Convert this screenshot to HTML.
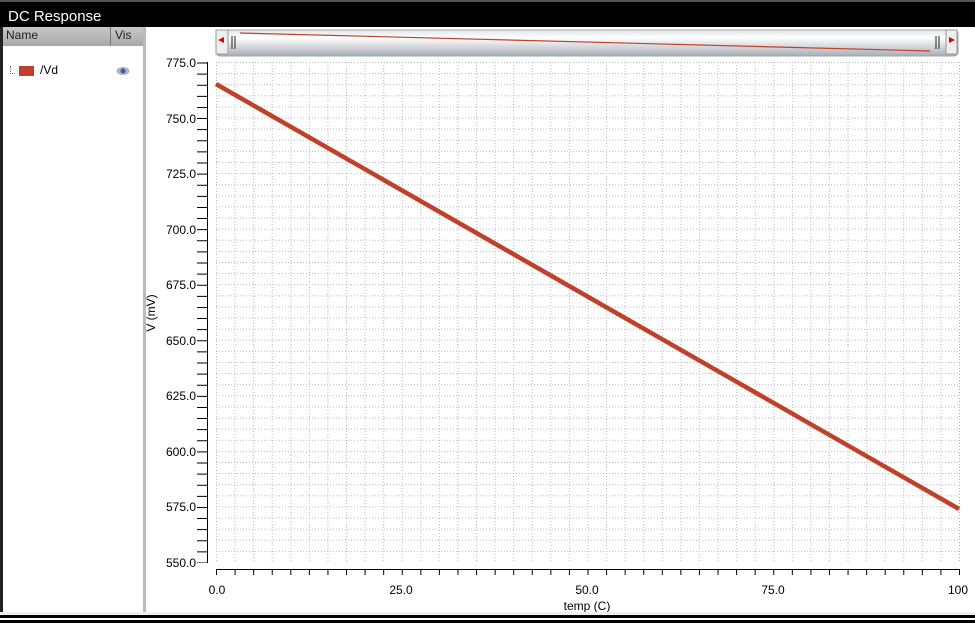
<!DOCTYPE html>
<html><head><style>
body{margin:0;width:975px;height:625px;overflow:hidden;background:#fff;font-family:"Liberation Sans",sans-serif;position:relative}
.t{position:absolute;left:0;top:0;width:975px;height:27px;background:#000;color:#fff;font-size:15px;line-height:29px;padding-left:8px;box-sizing:border-box;border-top:2px solid #555}
</style></head><body>
<div class="t">DC Response</div>
<div style="position:absolute;left:0;top:27px;width:3px;height:590px;background:#222"></div>
<div style="position:absolute;left:3px;top:27px;width:140px;height:19px;background:linear-gradient(#c8c8c8,#a8a8a8);font-size:12px;color:#222;line-height:16px">
<span style="position:absolute;left:3px">Name</span><span style="position:absolute;left:107px;top:0;width:1px;height:19px;background:#777"></span><span style="position:absolute;left:112px">Vis</span></div>
<div style="position:absolute;left:143px;top:27px;width:3px;height:586px;background:#bbb"></div>
<div style="position:absolute;left:10px;top:66px;width:4px;height:7px;border-left:1px dotted #666;border-bottom:1px dotted #666"></div>
<div style="position:absolute;left:19px;top:66px;width:15px;height:10px;background:#c0402a"></div>
<div style="position:absolute;left:40px;top:63px;font-size:12px">/Vd</div>
<svg style="position:absolute;left:116px;top:66px" width="14" height="10"><ellipse cx="7" cy="5" rx="6.5" ry="4" fill="#aab4cc"/><circle cx="7" cy="5" r="2.5" fill="#445a90"/></svg>
<svg style="position:absolute;left:0;top:0" width="975" height="625">
<defs>
<linearGradient id="sg" x1="0" y1="0" x2="0" y2="1"><stop offset="0" stop-color="#e4e6ea"/><stop offset=".3" stop-color="#fff"/><stop offset="1" stop-color="#a9adb5"/></linearGradient>
<pattern id="vg" x="216" y="62" width="18.575" height="3" patternUnits="userSpaceOnUse"><rect width="1" height="1" fill="#bbb"/></pattern>
<pattern id="hg" x="216" y="62" width="3" height="11.111" patternUnits="userSpaceOnUse"><rect width="1" height="1" fill="#bbb"/></pattern>
</defs>
<rect x="216" y="30" width="742" height="26" rx="4" fill="url(#sg)" stroke="#9aa" />
<rect x="216" y="30" width="12" height="24" fill="#eee" stroke="#999"/><path d="M218 40l6-3v6z" fill="#d00"/>
<rect x="946" y="30" width="11" height="24" fill="#eee" stroke="#999"/><path d="M955 40l-6-3v6z" fill="#d00"/>
<path d="M232 36v13M235 36v13M936 36v13M939 36v13" stroke="#222"/>
<path d="M240 33L930 51" stroke="#c0402a" stroke-width="1.2"/>
<rect x="216" y="62" width="743" height="500" fill="url(#vg)"/>
<rect x="216" y="62" width="743" height="500" fill="url(#hg)"/>
<line x1="959.5" y1="62" x2="959.5" y2="562" stroke="#aaa" stroke-dasharray="1 2"/>
<line x1="207.5" y1="62" x2="207.5" y2="563" stroke="#000"/>
<line x1="202" y1="62.5" x2="202" y2="563" stroke="#000" stroke-width="10" stroke-dasharray="1 10.111"/>
<line x1="216" y1="569.5" x2="960" y2="569.5" stroke="#000"/>
<line x1="216.5" y1="569" x2="216.5" y2="575" stroke="#000" stroke-width="1"/>
<line x1="216" y1="572" x2="961" y2="572" stroke="#000" stroke-width="6" stroke-dasharray="1 17.575"/>
<line x1="216" y1="84" x2="959" y2="509" stroke="#c0402a" stroke-width="4.5"/>
<g font-size="12" fill="#000" text-anchor="end">
<text x="196" y="67">775.0</text><text x="196" y="123">750.0</text><text x="196" y="178">725.0</text><text x="196" y="234">700.0</text><text x="196" y="289">675.0</text><text x="196" y="345">650.0</text><text x="196" y="400">625.0</text><text x="196" y="456">600.0</text><text x="196" y="511">575.0</text><text x="196" y="567">550.0</text>
</g>
<g font-size="12" text-anchor="middle">
<text x="217" y="594">0.0</text><text x="401" y="594">25.0</text><text x="587" y="594">50.0</text><text x="773" y="594">75.0</text><text x="958" y="594">100</text>
<text x="587" y="610">temp (C)</text>
<text transform="translate(155,313) rotate(-90)">V (mV)</text>
</g>
<rect x="0" y="612" width="975" height="3" fill="#eee"/>
<rect x="0" y="615" width="975" height="3" fill="#000"/>
<rect x="0" y="620" width="975" height="3" fill="#000"/>
</svg>
</body></html>
